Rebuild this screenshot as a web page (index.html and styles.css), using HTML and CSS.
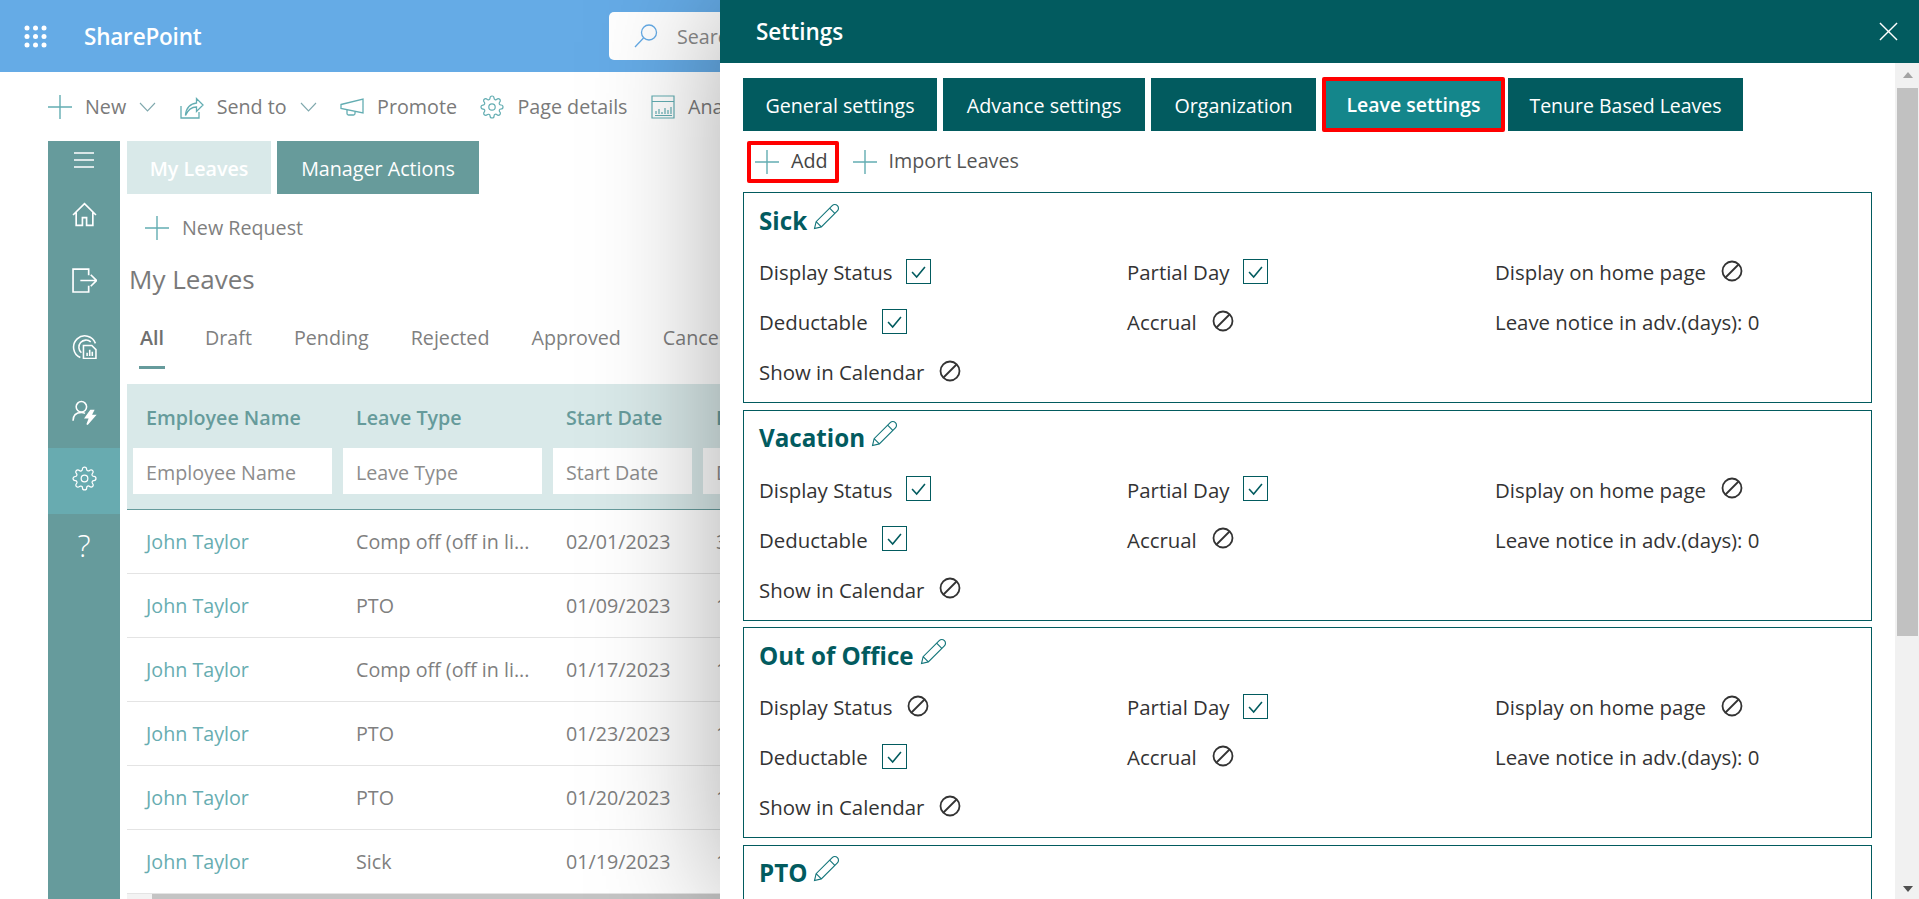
FILE: index.html
```html
<!DOCTYPE html>
<html lang="en">
<head>
<meta charset="utf-8">
<title>SharePoint - Settings</title>
<link rel="stylesheet" href="styles.css">
</head>
<body>
<svg class="sprite" aria-hidden="true">
  <symbol id="plus" viewBox="0 0 24 24"><path d="M12 0v24M0 12h24" fill="none" stroke="currentColor" stroke-width="1.4"/></symbol>
  <symbol id="chev" viewBox="0 0 17 10"><path d="M1 1l7.500 8L16 1" fill="none" stroke="currentColor" stroke-width="1.100"/></symbol>
  <symbol id="send" viewBox="0 0 24 24"><path d="M1 11v12h18v-6M1 23M5.500 20c.5-7 5-11.500 11-12V3.500l6.500 6.500-6.500 6.500v-4.500c-5 0-8.500 2.500-11 8.500z" fill="none" stroke="currentColor" stroke-width="1.300"/></symbol>
  <symbol id="promote" viewBox="0 0 24 20"><path d="M1 7.500L23 2v14L1 11.500zM1 7v5M7 13v3.500a1.500 1.500 0 0 0 1.500 1.500h5a1.500 1.500 0 0 0 1.500-1.500V15" fill="none" stroke="currentColor" stroke-width="1.300"/></symbol>
  <symbol id="gear" viewBox="0 0 24 24"><g fill="none" stroke="currentColor" stroke-width="1.200"><circle cx="12" cy="12" r="3.200"/><path d="M19.400 15a1.650 1.650 0 0 0 .33 1.820l.06.06a2 2 0 0 1 0 2.830 2 2 0 0 1-2.830 0l-.06-.06a1.650 1.650 0 0 0-1.820-.33 1.650 1.650 0 0 0-1 1.510V21a2 2 0 0 1-2 2 2 2 0 0 1-2-2v-.09A1.650 1.650 0 0 0 9 19.400a1.650 1.650 0 0 0-1.820.33l-.06.06a2 2 0 0 1-2.830 0 2 2 0 0 1 0-2.830l.06-.06a1.650 1.650 0 0 0 .33-1.820 1.650 1.650 0 0 0-1.510-1H3a2 2 0 0 1-2-2 2 2 0 0 1 2-2h.09A1.650 1.650 0 0 0 4.600 9a1.650 1.650 0 0 0-.33-1.820l-.06-.06a2 2 0 0 1 0-2.830 2 2 0 0 1 2.830 0l.06.06a1.650 1.650 0 0 0 1.820.33H9a1.650 1.650 0 0 0 1-1.510V3a2 2 0 0 1 2-2 2 2 0 0 1 2 2v.09a1.650 1.650 0 0 0 1 1.510 1.650 1.650 0 0 0 1.820-.33l.06-.06a2 2 0 0 1 2.830 0 2 2 0 0 1 0 2.830l-.06.06a1.650 1.650 0 0 0-.33 1.820V9a1.650 1.650 0 0 0 1.510 1H21a2 2 0 0 1 2 2 2 2 0 0 1-2 2h-.09a1.650 1.650 0 0 0-1.510 1z"/></g></symbol>
  <symbol id="chart" viewBox="0 0 24 24"><path d="M1 1h22v22H1zM1 6.500h22M5 19v-3M8 19v-5M11 19v-2M14 19v-6M17 19v-4M20 19v-7M4 20.500h17" fill="none" stroke="currentColor" stroke-width="1.200"/></symbol>
  <symbol id="menu" viewBox="0 0 24 16"><path d="M2 1h20M2 8h20M2 15h20" fill="none" stroke="currentColor" stroke-width="1.300"/></symbol>
  <symbol id="home" viewBox="0 0 24 24"><path d="M1 12.500L12 1.500l11 11M4 10v12.500h6V15h4v7.500h6V10" fill="none" stroke="currentColor" stroke-width="1.600"/></symbol>
  <symbol id="exit" viewBox="0 0 24 24"><path d="M16 7V1H1v22h15v-6M8 12h15M18 6.500l5.500 5.500-5.500 5.500" fill="none" stroke="currentColor" stroke-width="1.600"/></symbol>
  <symbol id="report" viewBox="0 0 24 24"><g fill="none" stroke="currentColor" stroke-width="1.500"><path d="M8 22.500A10.800 10.800 0 1 1 22.500 9"/><path d="M9 18A6.500 6.500 0 1 1 18 7.500"/><path d="M11 23.500V11h8l4 4v8.500z"/><path d="M14.500 21v-3M17 21v-6M19.500 21v-4"/></g></symbol>
  <symbol id="userbolt" viewBox="0 0 24 24"><g fill="none" stroke="currentColor" stroke-width="1.500"><circle cx="9" cy="6.500" r="5"/><path d="M1 20c0-5 3-8 8-8 1.500 0 2.500.3 3.500.8"/><path d="M18 10l-5 7h4l-2.500 6.500L22 15h-4l2.500-5z" fill="currentColor"/></g></symbol>
  <symbol id="search" viewBox="0 0 24 24"><g fill="none" stroke="currentColor" stroke-width="1.300"><circle cx="15" cy="8.500" r="7.500"/><path d="M9.500 14L1 23"/></g></symbol>
  <symbol id="close" viewBox="0 0 20 20"><path d="M1 1l18 18M19 1L1 19" fill="none" stroke="currentColor" stroke-width="1.500"/></symbol>
  <symbol id="pencil" viewBox="0 0 26 26"><path d="M1.500 24.500l1.500-6.500L18.500 2.500a3.500 3.500 0 0 1 5 5L8 23zM3 18l5 5M16 5l5 5" fill="none" stroke="currentColor" stroke-width="1.100"/></symbol>
  <symbol id="check" viewBox="0 0 25 25"><path d="M5.500 13l5 5.500 9-11" fill="none" stroke="currentColor" stroke-width="1.700"/></symbol>
  <symbol id="ban" viewBox="0 0 22 22"><g fill="none" stroke="currentColor" stroke-width="1.800"><circle cx="11" cy="11" r="9.500"/><path d="M17.500 4.500l-13 13"/></g></symbol>
</svg>

<header class="topbar">
  <div class="brand">
    <svg class="waffle" viewBox="0 0 23 23" aria-hidden="true"><g fill="#fff"><circle cx="3" cy="3" r="2.500"/><circle cx="11.500" cy="3" r="2.500"/><circle cx="20" cy="3" r="2.500"/><circle cx="3" cy="11.500" r="2.500"/><circle cx="11.500" cy="11.500" r="2.500"/><circle cx="20" cy="11.500" r="2.500"/><circle cx="3" cy="20" r="2.500"/><circle cx="11.500" cy="20" r="2.500"/><circle cx="20" cy="20" r="2.500"/></g></svg>
    <span class="brand-name">SharePoint</span>
  </div>
  <div class="searchbox">
    <svg class="ic-search"><use href="#search"/></svg>
    <span>Search</span>
  </div>
</header>

<nav class="cmdbar">
  <span class="cmd"><svg class="ic ic-plus"><use href="#plus"/></svg><span>New</span><svg class="ic-chev"><use href="#chev"/></svg></span>
  <span class="cmd"><svg class="ic"><use href="#send"/></svg><span>Send to</span><svg class="ic-chev"><use href="#chev"/></svg></span>
  <span class="cmd"><svg class="ic ic-promote"><use href="#promote"/></svg><span>Promote</span></span>
  <span class="cmd"><svg class="ic"><use href="#gear"/></svg><span>Page details</span></span>
  <span class="cmd"><svg class="ic"><use href="#chart"/></svg><span>Ana</span></span>
</nav>

<div class="app">
  <aside class="rail">
    <div class="rail-top"><svg class="ic-menu"><use href="#menu"/></svg></div>
    <div class="rail-item"><svg class="ic-rail"><use href="#home"/></svg></div>
    <div class="rail-item"><svg class="ic-rail"><use href="#exit"/></svg></div>
    <div class="rail-item"><svg class="ic-rail"><use href="#report"/></svg></div>
    <div class="rail-item"><svg class="ic-rail"><use href="#userbolt"/></svg></div>
    <div class="rail-item rail-active"><svg class="ic-rail"><use href="#gear"/></svg></div>
    <div class="rail-item rail-help">?</div>
  </aside>

  <main class="main">
    <div class="apptabs">
      <span class="apptab apptab-light">My Leaves</span>
      <span class="apptab apptab-dark">Manager Actions</span>
    </div>
    <div class="newreq"><svg class="ic ic-plus"><use href="#plus"/></svg><span>New Request</span></div>
    <h1 class="heading">My Leaves</h1>
    <div class="pivots">
      <span class="pivot pivot-on">All</span>
      <span class="pivot">Draft</span>
      <span class="pivot">Pending</span>
      <span class="pivot">Rejected</span>
      <span class="pivot">Approved</span>
      <span class="pivot">Cancelled</span>
    </div>
    <div class="tablehead">
      <div class="cols cols-head">
        <span class="th">Employee Name</span><span class="th">Leave Type</span><span class="th">Start Date</span><span class="th">Days</span>
      </div>
      <div class="cols">
        <input class="filter" placeholder="Employee Name"><input class="filter" placeholder="Leave Type"><input class="filter" placeholder="Start Date"><input class="filter" placeholder="Days">
      </div>
    </div>
    <div class="cols row"><span class="td td-name">John Taylor</span><span class="td">Comp off (off in li...</span><span class="td">02/01/2023</span><span class="td">3</span></div>
    <div class="cols row"><span class="td td-name">John Taylor</span><span class="td">PTO</span><span class="td">01/09/2023</span><span class="td">1</span></div>
    <div class="cols row"><span class="td td-name">John Taylor</span><span class="td">Comp off (off in li...</span><span class="td">01/17/2023</span><span class="td">1</span></div>
    <div class="cols row"><span class="td td-name">John Taylor</span><span class="td">PTO</span><span class="td">01/23/2023</span><span class="td">1</span></div>
    <div class="cols row"><span class="td td-name">John Taylor</span><span class="td">PTO</span><span class="td">01/20/2023</span><span class="td">1</span></div>
    <div class="cols row"><span class="td td-name">John Taylor</span><span class="td">Sick</span><span class="td">01/19/2023</span><span class="td">1</span></div>
    <div class="hscroll"><div class="hthumb"></div></div>
  </main>
</div>

<section class="panel">
  <header class="panel-head">
    <span class="panel-title">Settings</span>
    <svg class="ic-close"><use href="#close"/></svg>
  </header>
  <div class="panel-body">
    <div class="panel-content">
      <div class="tabs">
        <span class="tab tab-general">General settings</span>
        <span class="tab tab-advance">Advance settings</span>
        <span class="tab tab-org">Organization</span>
        <span class="tab tab-active">Leave settings</span>
        <span class="tab tab-last">Tenure Based Leaves</span>
      </div>
      <div class="actions">
        <span class="action action-add"><svg class="ic ic-plus"><use href="#plus"/></svg><span>Add</span></span>
        <span class="action"><svg class="ic ic-plus"><use href="#plus"/></svg><span>Import Leaves</span></span>
      </div>

      <article class="card">
        <h2 class="card-title">Sick<svg class="ic-pencil"><use href="#pencil"/></svg></h2>
        <div class="fields">
          <div class="field">Display Status<span class="box"><svg><use href="#check"/></svg></span></div>
          <div class="field">Partial Day<span class="box"><svg><use href="#check"/></svg></span></div>
          <div class="field">Display on home page<svg class="ban"><use href="#ban"/></svg></div>
          <div class="field">Deductable<span class="box"><svg><use href="#check"/></svg></span></div>
          <div class="field">Accrual<svg class="ban"><use href="#ban"/></svg></div>
          <div class="field">Leave notice in adv.(days): 0</div>
          <div class="field">Show in Calendar<svg class="ban"><use href="#ban"/></svg></div>
        </div>
      </article>

      <article class="card">
        <h2 class="card-title">Vacation<svg class="ic-pencil"><use href="#pencil"/></svg></h2>
        <div class="fields">
          <div class="field">Display Status<span class="box"><svg><use href="#check"/></svg></span></div>
          <div class="field">Partial Day<span class="box"><svg><use href="#check"/></svg></span></div>
          <div class="field">Display on home page<svg class="ban"><use href="#ban"/></svg></div>
          <div class="field">Deductable<span class="box"><svg><use href="#check"/></svg></span></div>
          <div class="field">Accrual<svg class="ban"><use href="#ban"/></svg></div>
          <div class="field">Leave notice in adv.(days): 0</div>
          <div class="field">Show in Calendar<svg class="ban"><use href="#ban"/></svg></div>
        </div>
      </article>

      <article class="card">
        <h2 class="card-title">Out of Office<svg class="ic-pencil"><use href="#pencil"/></svg></h2>
        <div class="fields">
          <div class="field">Display Status<svg class="ban"><use href="#ban"/></svg></div>
          <div class="field">Partial Day<span class="box"><svg><use href="#check"/></svg></span></div>
          <div class="field">Display on home page<svg class="ban"><use href="#ban"/></svg></div>
          <div class="field">Deductable<span class="box"><svg><use href="#check"/></svg></span></div>
          <div class="field">Accrual<svg class="ban"><use href="#ban"/></svg></div>
          <div class="field">Leave notice in adv.(days): 0</div>
          <div class="field">Show in Calendar<svg class="ban"><use href="#ban"/></svg></div>
        </div>
      </article>

      <article class="card">
        <h2 class="card-title">PTO<svg class="ic-pencil"><use href="#pencil"/></svg></h2>
      </article>
    </div>
    <div class="vscroll">
      <span class="arrow-up"></span>
      <div class="vthumb"></div>
      <span class="arrow-down"></span>
    </div>
  </div>
</section>
</body>
</html>
```

FILE: styles.css
```css
* { box-sizing: border-box; }
html, body { height: 100%; }
body {
  margin: 0;
  height: 899px;
  overflow: hidden;
  background: #fff;
  font-family: "Open Sans", "Noto Sans", sans-serif;
  font-size: 19.7px;
  color: #333;
  position: relative;
}
.sprite { display: none; }

/* top bar */
.topbar {
  height: 72px;
  background: #65abe6;
  display: flex;
  align-items: center;
  padding-left: 24px;
}
.brand { width: 585px; display: flex; align-items: center; }
.waffle { width: 23px; height: 23px; }
.brand-name { margin-left: 37px; color: #fff; font-size: 22.5px; font-weight: 600; letter-spacing: -.2px; }
.searchbox {
  width: 400px;
  height: 48px;
  background: #fff;
  border-radius: 5px;
  display: flex;
  align-items: center;
  padding-left: 25px;
  color: #8a8a8a;
}
.ic-search { width: 24px; height: 24px; color: #65abe6; margin-right: 19px; }

/* command bar */
.cmdbar {
  height: 69px;
  display: flex;
  align-items: center;
  padding-left: 48px;
  color: #7a7a7a;
  white-space: nowrap;
  font-size: 19.7px;
}
.cmd { display: flex; align-items: center; margin-right: 23.5px; }
.cmd > span { margin-left: 13px; }
.ic { width: 24px; height: 24px; color: #63adb2; flex: none; }
.ic-promote { height: 20px; }
.ic-chev { width: 17px; height: 10px; margin-left: 13px; color: #7fa8ad; }

/* app */
.app { display: flex; padding-left: 48px; height: 758px; }
.rail { width: 72px; background: #669b9c; flex: none; color: #fff; }
.rail-top { height: 43px; padding-bottom: 5px; display: flex; align-items: center; justify-content: center; }
.rail-item { height: 66px; padding-bottom: 5px; display: flex; align-items: center; justify-content: center; }
.rail-active { background: #68abb0; }
.rail-help { font-size: 31px; font-weight: 300; }
.ic-menu { width: 24px; height: 16px; }
.ic-rail { width: 25px; height: 25px; }

.main { margin-left: 7px; width: 1000px; flex: none; color: #7f7f7f; }
.apptabs { display: flex; gap: 6px; height: 53px; }
.apptab { display: flex; align-items: center; justify-content: center; color: #fff; font-size: 19.7px; padding-top: 2px; }
.apptab-light { width: 144px; background: #d9e9e9; font-weight: 600; }
.apptab-dark { width: 202px; background: #679b9b; }
.newreq { height: 68px; display: flex; align-items: center; padding-left: 18px; }
.newreq > span { margin: -2px 0 0 13px; }
.heading { margin: 0; height: 36px; padding-left: 2px; font-size: 26px; font-weight: 400; line-height: 34px; color: #7a7a7a; }
.pivots { height: 71px; margin-bottom: 15px; margin-left: 12px; display: flex; gap: 42px; padding-top: 24px; white-space: nowrap; }
.pivot { height: 47px; line-height: 32px; flex: none; }
.pivot-on { color: #6f6f6f; font-weight: 600; border-bottom: 3px solid #669b9c; padding: 0 1px; margin-right: -2px; }

.cols {
  display: grid;
  grid-template-columns: 199px 199px 139px 199px;
  column-gap: 11px;
  padding-left: 6px;
}
.tablehead { height: 126px; background: #d9e9e9; border-bottom: 1px solid #669b9c; }
.cols-head { height: 64px; align-items: center; padding-top: 3px; }
.th { padding-left: 13px; color: #669b9b; font-weight: 600; white-space: nowrap; }
.filter {
  height: 46px;
  width: 100%;
  border: 0;
  background: #fff;
  padding: 2px 0 0 13px;
  font: inherit;
  outline: 0;
}
.filter::placeholder { color: #8c8c8c; opacity: 1; }
.row { height: 64px; align-items: center; border-bottom: 1px solid #e4e4e4; }
.td { padding-left: 13px; white-space: nowrap; }
.td-name { color: #67adb1; }
.hscroll { height: 6px; background: #f3f3f3; padding-left: 25px; }
.hthumb { height: 6px; background: #c4c4c4; }

/* settings panel */
.panel {
  position: absolute;
  top: 0;
  left: 720px;
  right: 0;
  bottom: 0;
  background: #fff;
  box-shadow: 0 0 120px rgba(0, 0, 0, .34);
  display: flex;
  flex-direction: column;
}
.panel-head {
  height: 63px;
  flex: none;
  background: #025b5f;
  color: #fff;
  display: flex;
  align-items: center;
  justify-content: space-between;
  padding: 0 21px 0 36px;
}
.panel-title { font-size: 22.5px; font-weight: 600; }
.ic-close { width: 19px; height: 19px; color: #fff; }
.panel-body { flex: 1; display: flex; min-height: 0; }
.panel-content { flex: 1; min-width: 0; overflow: hidden; padding: 15px 23px 0 23px; }

.tabs { display: flex; align-items: center; gap: 6px; height: 53px; }
.tab {
  height: 53px;
  padding-top: 2px;
  display: flex;
  align-items: center;
  justify-content: center;
  background: #025b5f;
  color: #fff;
  white-space: nowrap;
  flex: none;
}
.tab-general { width: 194px; }
.tab-advance { width: 202px; }
.tab-org { width: 165px; }
.tab-active {
  width: 183px;
  height: 55px;
  padding-top: 0;
  background: #14868b;
  border: 4px solid #f00;
  border-radius: 2px;
  font-weight: 600;
  font-size: 19.5px;
}
.tab-last { width: 235px; margin-left: -3px; font-size: 19.5px; }

.actions { display: flex; align-items: center; height: 61px; padding-left: 4px; gap: 10px; }
.action { display: flex; align-items: center; height: 42px; padding-left: 4px; color: #555; white-space: nowrap; }
.action > span { margin: -2px 0 0 12px; }
.action-add { border: 4px solid #f00; border-radius: 2px; padding: 0 7px 0 4px; color: #444; }

.card {
  height: 211px;
  margin-bottom: 6.67px;
  border: 1px solid #025b5f;
  padding: 7px 0 0 15px;
}
.card-title {
  margin: 0;
  height: 40px;
  display: flex;
  align-items: center;
  font-size: 24.2px;
  font-weight: 700;
  color: #025b5f;
  white-space: nowrap;
}
.ic-pencil { width: 27px; height: 27px; margin: -8px 0 0 6px; color: #14767b; }
.fields {
  margin-top: 7px;
  display: grid;
  grid-template-columns: repeat(3, 368px);
  grid-auto-rows: 50px;
  font-size: 20.4px;
}
.field { display: flex; align-items: center; gap: 16px; white-space: nowrap; color: #333; }
.box { width: 25px; height: 25px; border: 1px solid #025b5f; color: #025b5f; display: block; margin: -2px 0 0 -2px; flex: none; }
.box svg { display: block; width: 23px; height: 23px; }
.ban { width: 22px; height: 22px; color: #333; margin: -3px 0 0 -1px; flex: none; }

/* scrollbar */
.vscroll {
  width: 24px;
  flex: none;
  background: #f1f1f1;
  display: flex;
  flex-direction: column;
  align-items: center;
  padding: 9px 1px 7px 2px;
}
.arrow-up, .arrow-down { width: 0; height: 0; border-left: 5.500px solid transparent; border-right: 5.500px solid transparent; flex: none; }
.arrow-up { border-bottom: 6px solid #a3a3a3; }
.arrow-down { border-top: 6px solid #505050; margin-top: auto; }
.vthumb { width: 21px; height: 548px; margin-top: 10px; background: #c1c1c1; }
```
